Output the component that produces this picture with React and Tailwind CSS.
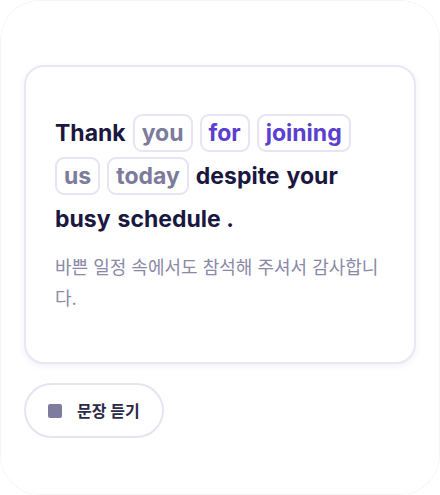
const words = [
    { t: "Thank" },
    { t: "you", tag: "gray" },
    { t: "for", tag: "purple" },
    { t: "joining", tag: "purple" },
    { t: "us", tag: "gray" },
    { t: "today", tag: "gray" },
    { t: "despite" },
    { t: "your" },
    { t: "busy" },
    { t: "schedule ." },
];

const Word = ({ w }) => {
    if (!w.tag) {
        return <span className="h-[38px] flex items-center text-[#1a1740]">{w.t}</span>;
    }
    return (
        <span
            className={`h-[38px] flex items-center px-[7px] border-2 border-[#e6e4f5] rounded-[9px] bg-white ${
                w.tag === "purple" ? "text-[#5a3fd0]" : "text-[#7c7b9b]"
            }`}
        >
            {w.t}
        </span>
    );
};

export default function App() {
    return (
        <div
            className="w-[440px] h-[495px] bg-white rounded-[40px] border border-dotted border-[#ececf0] px-[23px] pt-[64px]"
            style={{ fontFamily: "Inter, 'Noto Sans CJK KR', sans-serif" }}
        >
            {/* Sentence card */}
            <div className="bg-white border-2 border-[#e8e7f4] rounded-[20px] shadow-[0_2px_6px_rgba(80,70,160,0.08)] px-[29px] pt-[47px] pb-[48px]">
                <div className="flex flex-wrap gap-x-[7px] gap-y-[5px] text-[23px] font-bold leading-none">
                    {words.map((w, i) => (
                        <Word key={i} w={w} />
                    ))}
                </div>
                <p className="mt-[14px] text-[18px] leading-[31px] text-[#8a89a7]">
                    바쁜 일정 속에서도 참석해 주셔서 감사합니다.
                </p>
            </div>

            {/* Listen button */}
            <button className="mt-[19px] h-[55px] px-[22px] flex items-center gap-[15px] rounded-full border-2 border-[#e6e4f3] bg-white">
                <span className="w-[14px] h-[14px] rounded-[2px] bg-[#7d7c9c]" />
                <span className="text-[16px] font-bold text-[#2b2948]">문장 듣기</span>
            </button>
        </div>
    );
}
